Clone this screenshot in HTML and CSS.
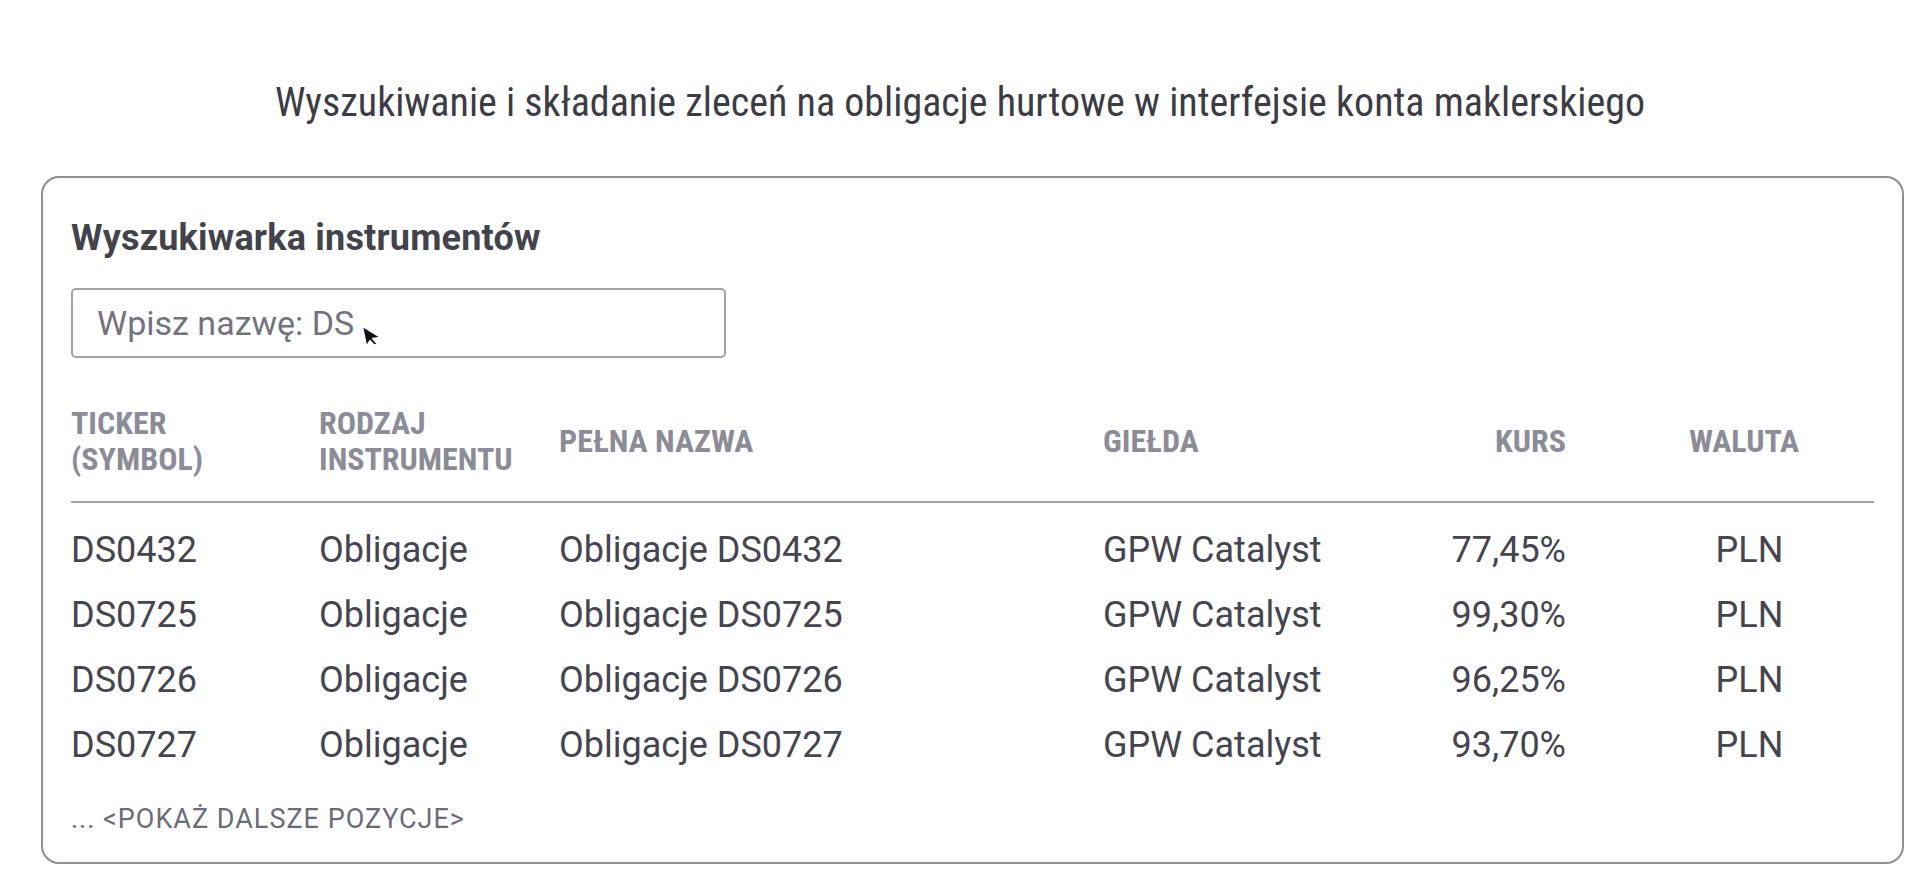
FILE: index.html
```html
<!DOCTYPE html>
<html lang="pl">
<head>
  <meta charset="UTF-8" />
  <title>Wyszukiwarka instrumentów</title>
  <meta name="viewport" content="width=device-width, initial-scale=1.0" />
  <link rel="stylesheet" href="styles.css">
</head>
<body>

  <h1>Wyszukiwanie i składanie zleceń na obligacje hurtowe w interfejsie konta maklerskiego</h1>

  <div class="card">
    <h2>Wyszukiwarka instrumentów</h2>

    <div class="search">
      <input type="text" placeholder="Wpisz nazwę: DS">
      <svg class="pointer" width="22" height="24" viewBox="0 0 22 24">
        <path d="M1.5 1.5 L5.5 21 L9 15.5 L13.5 20.5 L16 18.5 L11.5 13.5 L19.5 12.5 Z" fill="#111" stroke="#fff" stroke-width="1.3" stroke-linejoin="round"/>
      </svg>
    </div>

    <div class="results">
      <div class="th">Ticker<br>(symbol)</div>
      <div class="th">Rodzaj<br>instrumentu</div>
      <div class="th">Pełna nazwa</div>
      <div class="th">Giełda</div>
      <div class="th right">Kurs</div>
      <div class="th center">Waluta</div>

      <div class="td">DS0432</div>
      <div class="td">Obligacje</div>
      <div class="td">Obligacje DS0432</div>
      <div class="td">GPW Catalyst</div>
      <div class="td right">77,45%</div>
      <div class="td center">PLN</div>

      <div class="td">DS0725</div>
      <div class="td">Obligacje</div>
      <div class="td">Obligacje DS0725</div>
      <div class="td">GPW Catalyst</div>
      <div class="td right">99,30%</div>
      <div class="td center">PLN</div>

      <div class="td">DS0726</div>
      <div class="td">Obligacje</div>
      <div class="td">Obligacje DS0726</div>
      <div class="td">GPW Catalyst</div>
      <div class="td right">96,25%</div>
      <div class="td center">PLN</div>

      <div class="td">DS0727</div>
      <div class="td">Obligacje</div>
      <div class="td">Obligacje DS0727</div>
      <div class="td">GPW Catalyst</div>
      <div class="td right">93,70%</div>
      <div class="td center">PLN</div>
    </div>

    <div class="more">... &lt;POKAŻ DALSZE POZYCJE&gt;</div>
  </div>

</body>
</html>
```
FILE: styles.css
```css
* {
  margin: 0;
  padding: 0;
  box-sizing: border-box;
}

body {
  background: #fff;
  font-family: Roboto, sans-serif;
  color: #45454f;
  padding-top: 79px;
}

h1 {
  font-family: 'Roboto Condensed', Roboto, sans-serif;
  font-weight: 400;
  font-size: 40px;
  line-height: 48px;
  color: #3c3c44;
  text-align: center;
  margin-bottom: 49px;
}

.card {
  margin: 0 16px 0 41px;
  border: 2px solid #8e8e99;
  border-radius: 18px;
  padding: 40px 28px 26px;
}

h2 {
  font-size: 36px;
  line-height: 40px;
  letter-spacing: 0.2px;
  font-weight: 700;
  color: #43434c;
  margin-bottom: 30px;
}

.search {
  position: relative;
  width: 655px;
}

.search input {
  display: block;
  width: 100%;
  height: 70px;
  border: 2px solid #a3a3ad;
  border-radius: 5px;
  padding: 0 24px;
  font-family: Roboto, sans-serif;
  font-size: 34px;
  color: #45454f;
  outline: none;
}

.search input::placeholder {
  color: #73737f;
}

.pointer {
  position: absolute;
  left: 290px;
  top: 37px;
}

.results {
  display: grid;
  grid-template-columns: 248px 240px 544px 1fr 194px 260px;
  margin-top: 47px;
}

.th {
  display: flex;
  align-items: center;
  font-family: 'Roboto Condensed', Roboto, sans-serif;
  font-weight: 700;
  font-size: 32px;
  line-height: 36px;
  color: #8c8c98;
  text-transform: uppercase;
  padding-bottom: 24px;
  border-bottom: 2px solid #a3a3ad;
  margin-bottom: 15px;
}

.th.right {
  justify-content: flex-end;
  padding-right: 48px;
}

.th.center {
  justify-content: center;
}

.td {
  font-size: 36px;
  line-height: 65px;
  color: #45454f;
  white-space: nowrap;
}

.td.right {
  text-align: right;
  padding-right: 48px;
}

.td.center {
  text-align: center;
  padding-left: 11px;
}

.more {
  margin-top: 24px;
  font-size: 27px;
  font-weight: 400;
  line-height: 34px;
  letter-spacing: 1px;
  color: #6c6c78;
}
```
